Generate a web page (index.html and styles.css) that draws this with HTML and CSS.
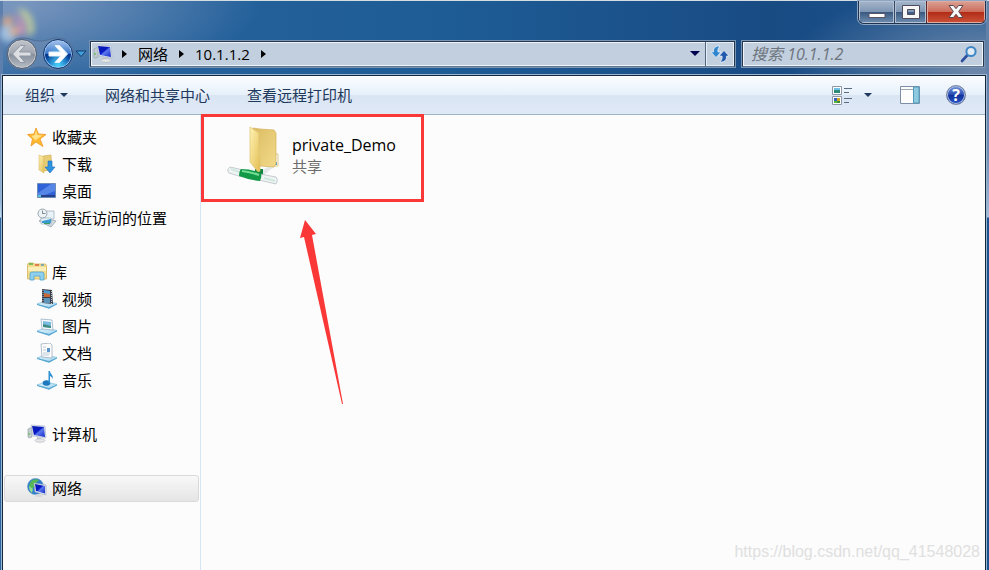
FILE: index.html
```html
<!DOCTYPE html>
<html lang="zh-CN">
<head>
  <meta charset="UTF-8">
  <title>10.1.1.2</title>
  <meta name="viewport" content="width=device-width, initial-scale=1.0">
  <link rel="stylesheet" href="styles.css">
</head>
<body>

  <!-- Shared icons -->
  <svg class="defs" width="0" height="0" aria-hidden="true">
    <defs>
      <linearGradient id="screen" x1="0" y1="0" x2="1" y2="1">
        <stop offset="0" stop-color="#0a1cae"/>
        <stop offset=".45" stop-color="#0717c4"/>
        <stop offset=".55" stop-color="#5b78ee"/>
        <stop offset="1" stop-color="#1226c8"/>
      </linearGradient>
      <linearGradient id="gold" x1="0" y1="0" x2="1" y2="1">
        <stop offset="0" stop-color="#fff3b4"/>
        <stop offset="1" stop-color="#e3bd52"/>
      </linearGradient>
      <linearGradient id="gold-back" x1="0" y1="0" x2="1" y2="1">
        <stop offset="0" stop-color="#dcbc62"/>
        <stop offset="1" stop-color="#f2da8a"/>
      </linearGradient>
      <linearGradient id="tray" x1="0" y1="0" x2="1" y2="1">
        <stop offset="0" stop-color="#e4f6fd"/>
        <stop offset="1" stop-color="#9fd2ec"/>
      </linearGradient>
      <symbol id="computer" viewBox="0 0 20 20">
        <path d="M1 5l4-2v10l-3 1-1-1z" fill="#c3cdd0" stroke="#8d999d" stroke-width=".6"/>
        <path d="M2 9v2" stroke="#45b72e" stroke-width="1"/>
        <path d="M4 1l14 1 1 12-13-2z" fill="#dfe6ef" stroke="#aab4c4" stroke-width=".6"/>
        <path d="M5 2l12 1 1 10-11-2z" fill="url(#screen)"/>
        <path d="M10 13l4 1v2h-4z" fill="#c0c5cb"/>
        <ellipse cx="13" cy="16.500" rx="5" ry="1.800" fill="#e5e7e9" stroke="#b0b4b8" stroke-width=".6"/>
      </symbol>
      <symbol id="tray-base" viewBox="0 0 20 20">
        <path d="M0 15l8-3 12 2.500-8 4.500z" fill="url(#tray)" stroke="#79bbdc" stroke-width=".7"/>
        <path d="M0 15l12 3 8-3.500v1l-8 4.200L0 16z" fill="#5aa8d2"/>
      </symbol>
    </defs>
  </svg>

  <div class="window">
    <header class="titlebar">
      <svg class="glow" viewBox="0 0 44 44" width="44" height="44" aria-hidden="true">
        <circle cx="8" cy="32" r="9" fill="#a7c6e4"/>
        <path d="M2 18l8-4 4 8-10 4z" fill="#e0a684"/>
        <path d="M17 8c10-2 19 8 17 24l-8 4c4-10 0-18-9-28z" fill="#c3cf9b"/>
        <path d="M14 12c10 4 14 12 10 24l-7-4c2-8 0-12-3-20z" fill="#c993b8"/>
        <path d="M12 24l8 4-4 8-7-3z" fill="#e6b090"/>
      </svg>

      <div class="caption">
        <button class="caption-btn minimize" aria-label="最小化">
          <svg viewBox="0 0 18 18" width="18" height="18"><rect x="1" y="10.500" width="16" height="4" fill="#fff" stroke="#58546a"/></svg>
        </button>
        <button class="caption-btn maximize" aria-label="最大化">
          <svg viewBox="0 0 18 18" width="18" height="18"><path d="M.5 2.500h17v13H.5zM5.500 6.500v5h7v-5z" fill="#f6f6f6" fill-rule="evenodd" stroke="#4f4b5f"/></svg>
        </button>
        <button class="caption-btn close" aria-label="关闭">
          <svg viewBox="0 0 18 18" width="18" height="18"><path d="M2 2.500h4.500L9 5.700l2.500-3.200H16L11.700 8.500l4.300 6h-4.500L9 11.300l-2.500 3.200H2l4.300-6z" fill="#f8f8f8" stroke="#5b4852"/></svg>
        </button>
      </div>

      <div class="navbar">
        <div class="history">
          <svg class="history-pill" viewBox="0 0 70 34" width="70" height="34" aria-hidden="true">
            <path d="M17 1c8 0 10 3 18 3s10-3 18-3a16 16 0 0 1 0 32c-8 0-10-3-18-3s-10 3-18 3a16 16 0 0 1 0-32z" fill="#6f8cb3" fill-opacity=".6" stroke="#4f6f97" stroke-width="1"/>
          </svg>
          <button class="round back" aria-label="后退">
            <svg viewBox="0 0 24 24" width="24" height="24"><path d="M2.500 12l8-8.500H15L9.500 10H21v4H9.500l5.500 6.500h-4.500z" fill="#dcdee1" stroke="#8e98a6"/></svg>
          </button>
          <button class="round forward" aria-label="前进">
            <svg viewBox="0 0 24 24" width="24" height="24"><path d="M21.500 12l-8-8.500H9l5.500 6.500H3v4h11.500L9 20.500h4.500z" fill="#fff" stroke="#e6f2fc"/></svg>
          </button>
        </div>
        <button class="recent" aria-label="最近浏览的位置">
          <svg viewBox="0 0 12 8" width="12" height="8"><path d="M1 1h10L6 6.500z" fill="#3fa0dc" stroke="#153e70"/></svg>
        </button>

        <nav class="address" aria-label="地址">
          <svg class="address-icon" width="20" height="20"><use href="#computer"/></svg>
          <span class="arrow-right"></span>
          <a href="#">网络</a>
          <span class="arrow-right"></span>
          <a href="#">10.1.1.2</a>
          <span class="arrow-right"></span>
          <button class="address-drop" aria-label="以前的位置"><span class="arrow-down"></span></button>
          <button class="refresh" aria-label="刷新">
            <svg viewBox="0 0 18 18" width="18" height="18">
              <path d="M7 1C3 2 2.500 4 2.500 7H0l5 5.500L10 7H7c-.5-2 0-4 2-6z" fill="#2f86cf" stroke="#e9f5fd" stroke-width=".7"/>
              <path d="M11 17c4-1 4.500-3 4.500-6H18l-5-5.500L8 11h3c.5 2 0 4-2 6z" fill="#2159ad" stroke="#e9f5fd" stroke-width=".7"/>
            </svg>
          </button>
        </nav>

        <label class="search">
          <input type="text" placeholder="搜索 10.1.1.2" aria-label="搜索 10.1.1.2">
          <svg viewBox="0 0 18 18" width="18" height="18">
            <path d="M2 16l5.500-6" stroke="#2c4f9e" stroke-width="2.600" stroke-linecap="round"/>
            <circle cx="11" cy="6.500" r="4.600" fill="#e0ebf5" stroke="#3e86c4" stroke-width="2"/>
          </svg>
        </label>
      </div>
    </header>

    <div class="client">
      <div class="toolbar">
        <button class="organize">组织 <span class="arrow-down"></span></button>
        <button>网络和共享中心</button>
        <button>查看远程打印机</button>
        <div class="tools">
          <button class="view" aria-label="更改您的视图">
            <svg viewBox="0 0 20 19" width="20" height="19">
              <path d="M.5.500h9v8h-9zM.5 10.500h9v8h-9z" fill="#fff" stroke="#8c98a8"/>
              <path d="M2 2h6v2H2z" fill="#6fc0e4"/><path d="M2 4h6v3H2z" fill="#2d8c78"/>
              <path d="M2 12h3v3H2z" fill="#2e63bf"/><path d="M5 12h3v3H5z" fill="#d8a51f"/>
              <path d="M2 15h3v2H2z" fill="#5db53c"/><path d="M5 15h3v2H5z" fill="#388e3e"/>
              <path d="M12 2.500h8M12 6.500h5M12 12.500h8M12 16.500h5" stroke="#5a6b82"/>
            </svg>
          </button>
          <button class="view-drop" aria-label="更多选项"><span class="arrow-down"></span></button>
          <button class="preview" aria-label="显示预览窗格">
            <svg viewBox="0 0 20 18" width="20" height="18">
              <path d="M.5.500h19v17H.5z" fill="#fdfdfd" stroke="#7c8fa6"/>
              <path d="M1 3.500h12" stroke="#9aa8b8"/>
              <path d="M13.500 1h5.500v16h-5.500z" fill="#8dc9df" stroke="#559bbd"/>
            </svg>
          </button>
          <button class="help" aria-label="获取帮助">?</button>
        </div>
      </div>

      <div class="content">
        <aside class="sidebar">
          <ul class="group">
            <li><a href="#">
              <svg viewBox="0 0 20 20" width="20" height="20"><path d="M9 1l2.500 6 7.500.500-6 4.500 3 7.500-7-4.500-5 4 1.500-7-5-4.500L7 7z" fill="#ffb92e" stroke="#ef9d2c" stroke-width=".9"/><path d="M9 3l1.500 5 5 .500-5 3-2 2-4-4.500L8 8z" fill="#ffe28a"/></svg>
              收藏夹</a></li>
            <li class="child"><a href="#">
              <svg viewBox="0 0 20 20" width="20" height="20"><path d="M6 2l8-1 1 15-9 1z" fill="#e8cd75" stroke="#c9a84e" stroke-width=".6"/><path d="M2 1l5 2v16l-5-3z" fill="url(#gold)" stroke="#d9bd66" stroke-width=".6"/><path d="M11 7h4v6h3l-5 6-5-6h3z" fill="#2f93e0" stroke="#1c6fbd" stroke-width=".6"/></svg>
              下载</a></li>
            <li class="child"><a href="#">
              <svg viewBox="0 0 20 20" width="20" height="20"><path d="M.5 2.500h18v14H.5z" fill="#2f62d8" stroke="#6f8bb8"/><path d="M1 12L14 3h4v7L8 14H1z" fill="#6f9cf0" opacity=".6"/><path d="M1 14h17v2H1z" fill="#26408a"/><path d="M1 14h3v2H1z" fill="#55c4d0"/></svg>
              桌面</a></li>
            <li class="child"><a href="#">
              <svg viewBox="0 0 20 20" width="20" height="20"><path d="M8 3h9v8H8z" fill="#e8f2f8" stroke="#98a9b8" stroke-width=".7"/><path d="M2 13l4-3 13 3-5 6z" fill="#d3dbe1" stroke="#8e9ba6" stroke-width=".7"/><path d="M4 10h10v6H4z" fill="#e8f4fa" stroke="#97a8b5" stroke-width=".6"/><path d="M5 13l9-2v4H5z" fill="#3b9bd0"/><path d="M7 15h6v1H7z" fill="#3d9b64"/><circle cx="5.500" cy="5.500" r="4.500" fill="#edf2f5" stroke="#98a6b0"/><path d="M5.500 2.500v3h3" fill="none" stroke="#60717e" stroke-width=".8"/></svg>
              最近访问的位置</a></li>
          </ul>

          <ul class="group">
            <li><a href="#">
              <svg viewBox="0 0 20 20" width="20" height="20"><path d="M.5 3l1-2h5l1 1h11l1 2v13H.5z" fill="#f3dc8b" stroke="#d5b458" stroke-width=".8"/><path d="M2 2h4" stroke="#3fae49" stroke-width="1.300"/><path d="M8 3h4" stroke="#d64536" stroke-width="1.200"/><path d="M14 3h3" stroke="#3b8fd3" stroke-width="1.200"/><path d="M1 5h18v4H1z" fill="#fbeeb9"/><path d="M3 18v-6q0-2 2-2h10q2 0 2 2v6h-4v-4H7v4z" fill="#8fd0ee" stroke="#4ea3cf" stroke-width=".8"/></svg>
              库</a></li>
            <li class="child"><a href="#">
              <svg viewBox="0 0 20 20" width="20" height="20"><use href="#tray-base"/><path d="M5 0l10 1 1 14-11-1z" fill="#3a3f4a"/><path d="M7 1l6 1v5H7z" fill="#4a9bd0"/><path d="M7 4l6 1v3H7z" fill="#c8693a"/><path d="M7 9h6v5H7z" fill="#5b94b8"/><path d="M6 1v13M14.500 2v13" stroke="#b9c1cb" stroke-dasharray="1 1"/></svg>
              视频</a></li>
            <li class="child"><a href="#">
              <svg viewBox="0 0 20 20" width="20" height="20"><use href="#tray-base"/><path d="M4 3l11 1 1 10-11-1z" fill="#f8fbfd" stroke="#98b1c5" stroke-width=".8"/><path d="M6 5l8 1v6l-8-1z" fill="#7abbe4"/><path d="M6 8l8 2v2l-8-1z" fill="#3f8c7e"/></svg>
              图片</a></li>
            <li class="child"><a href="#">
              <svg viewBox="0 0 20 20" width="20" height="20"><use href="#tray-base"/><path d="M4 1l9-1 2 2v13l-10-1z" fill="#fdfdfe" stroke="#9daebe" stroke-width=".8"/><path d="M6 4h3M6 7h3M6 10h7M6 12h6" stroke="#a9bccd" stroke-width=".8"/><path d="M10 5h3v4h-3z" fill="#5b97cd"/></svg>
              文档</a></li>
            <li class="child"><a href="#">
              <svg viewBox="0 0 20 20" width="20" height="20"><use href="#tray-base"/><ellipse cx="9.500" cy="13" rx="3.800" ry="2.800" fill="#1e78bd"/><path d="M11.500 13V1h1.500c0 3 4 4 2.500 8-.5-2-1.500-2.500-2.500-3v7z" fill="#2f91d2"/></svg>
              音乐</a></li>
          </ul>

          <ul class="group">
            <li><a href="#"><svg width="20" height="20"><use href="#computer"/></svg> 计算机</a></li>
          </ul>

          <ul class="group">
            <li class="selected"><a href="#">
              <svg viewBox="0 0 20 20" width="20" height="20"><circle cx="8.500" cy="8.500" r="8" fill="#2f7fcb" stroke="#5795c6" stroke-width=".6"/><path d="M4 3q4-3 8-1l-3 3-2 4-3 3-2-4z" fill="#56b956"/><path d="M2 8l4 3-1 4q-3-2-3-7z" fill="#8edb90"/><path d="M7 5l12 2v10L8 14z" fill="#e7ecf4" stroke="#98a5b8" stroke-width=".6"/><path d="M8 6l10 2v7.500L9 13z" fill="url(#screen)"/><ellipse cx="12" cy="17.500" rx="4" ry="1.500" fill="#d6dade"/></svg>
              网络</a></li>
          </ul>
        </aside>

        <main class="files">
          <a class="share" href="#">
            <svg viewBox="0 0 54 60" width="54" height="60" aria-hidden="true">
              <path d="M33 46l9-6 5 1-10 8z" fill="#e4e8ea"/>
              <path d="M47 28h4v12h-4z" fill="#fafafa" stroke="#d8bf74" stroke-width=".8"/>
              <path d="M48 36h2v3h-2z" fill="#4a9be0"/>
              <path d="M26 2l7 1 14 1 2 3v31l-2 3-14-1z" fill="url(#gold-back)" stroke="#d3b25a" stroke-width=".7"/>
              <path d="M28 43h8v6h-8z" fill="#12843e"/>
              <path d="M23 1l9 6v21l1 2v15l-2 1-8-10z" fill="url(#gold)" stroke="#dec273" stroke-width=".7"/>
              <path d="M3 41l13 3-1 7-13-4q-3-3 1-6z" fill="#eef3f4" stroke="#b7c0c4" stroke-width=".8"/>
              <path d="M33 48l16 3q3 3 0 7l-17-4z" fill="#eef3f4" stroke="#b7c0c4" stroke-width=".8"/>
              <path d="M14 43q10 0 20 4 1 4-1 8-11-1-21-5 0-5 2-7z" fill="#139a48"/>
              <path d="M15 45q9 1 17 4" fill="none" stroke="#75dc96" stroke-width="2"/>
              <path d="M4 43l8 3M37 52l11 3" stroke="#c9e6d8" stroke-width="1.500"/>
            </svg>
            <span class="share-text">
              <span class="share-name">private_Demo</span>
              <span class="share-type">共享</span>
            </span>
          </a>
          <svg class="pointer" viewBox="0 0 46 186" width="46" height="186" aria-hidden="true">
            <path d="M5 1l11 14-4 1 31 169h-1L4 18l-4 1z" fill="#fb3838"/>
          </svg>
          <p class="watermark">https://blog.csdn.net/qq_41548028</p>
        </main>
      </div>
    </div>
  </div>

</body>
</html>
```
FILE: styles.css
```css
* {
  box-sizing: border-box;
  margin: 0;
  padding: 0;
}

body {
  font-family: 'Open Sans', 'Noto Sans CJK SC', sans-serif;
  font-size: 15px;
  line-height: 20px;
  color: #000;
}

button,
input {
  font: inherit;
  color: inherit;
  border: none;
  background: none;
}

a {
  color: inherit;
  text-decoration: none;
}

ul {
  list-style: none;
}

svg {
  display: block;
  flex: none;
}

.defs {
  position: absolute;
}

.window {
  position: relative;
  display: flex;
  flex-direction: column;
  min-height: 100vh;
  padding: 0 3px 0 2px;
  border-top: 1px solid #d3dde2;
  background:
    linear-gradient(#6281a8 75px, #6d8db4 150px, #a3bddb 216px, transparent 217px) right top / 3px 217px no-repeat,
    linear-gradient(#5c7fae 75px, #8fb4d8 200px, #c6e0f2 216px, transparent 217px) left top / 3px 217px no-repeat,
    radial-gradient(ellipse 260px 90px at 0 0, #7895bd 10%, transparent),
    radial-gradient(ellipse 200px 90px at 100% 70px, #6b86a8 10%, transparent),
    linear-gradient(90deg, #2a659f, #1e5c96 45%, #194b83 78%, #1a5490);
}

/* Title bar */
.titlebar {
  display: flex;
  flex-direction: column;
}

.glow {
  position: absolute;
  top: 0;
  left: 0;
  filter: blur(3px);
  opacity: 0.9;
}

.caption {
  display: flex;
  align-self: flex-end;
  height: 23px;
  border: 1px solid #1f3350;
  border-top: none;
  border-radius: 0 0 6px 6px;
  box-shadow: 0 0 0 1px #8fa6c2;
  overflow: hidden;
}

.caption-btn {
  display: flex;
  align-items: center;
  justify-content: center;
  width: 35px;
  background: linear-gradient(#a5b6cb, #7f97b4 48%, #38587f 50%, #6f8eb1);
  box-shadow: inset 0 0 0 1px #b3c1d2;
}

.maximize {
  width: 32px;
  border-left: 1px solid #304765;
}

.close {
  width: 59px;
  border-left: 1px solid #5c2a2a;
  background: linear-gradient(#dca295, #cc6d5c 48%, #b02b16 50%, #cc5338);
  box-shadow: inset 0 0 0 1px #dfaaa0;
}

.navbar {
  display: flex;
  align-items: center;
  height: 51px;
  padding: 8px 2px 0 3px;
}

.history {
  position: relative;
  display: flex;
  gap: 6px;
  padding: 0 2px;
}

.history-pill {
  position: absolute;
  top: -2px;
  left: 0;
}

.round {
  position: relative;
  display: flex;
  align-items: center;
  justify-content: center;
  width: 30px;
  height: 30px;
  border: 1px solid #555f70;
  border-radius: 50%;
  background: linear-gradient(#c1c5cb, #a0a6b0 48%, #858e9b 50%, #b8bdc4);
  box-shadow: inset 0 0 0 1px #c9cdd3;
}

.forward {
  border-color: #15386f;
  background: radial-gradient(ellipse at 50% 100%, #4fd9ff, transparent 60%), linear-gradient(#a9c5ed, #3c79cb 48%, #053088 50%, #1680d2);
  box-shadow: inset 0 0 0 1px #9cc3ec;
}

.recent {
  margin: 0 3px 0 0;
}

.address,
.search {
  display: flex;
  align-items: center;
  height: 26px;
  border: 1px solid #26384f;
  border-bottom-color: #62788f;
  background: #c1cfdf;
  box-shadow: inset 0 0 0 1px #eef4f9, 0 0 0 1px #7895b6;
}

.address {
  flex: 1;
  padding-left: 2px;
  margin-right: 7px;
}

.address-icon {
  margin-right: 9px;
}

.address a {
  margin: 0 11px;
}

.arrow-right {
  border: 4px solid transparent;
  border-left: 5px solid #000;
  border-right: none;
}

.arrow-down {
  display: inline-block;
  border: 4px solid transparent;
  border-top: 4px solid #1e395b;
  border-bottom: none;
}

.address-drop {
  display: flex;
  align-items: center;
  justify-content: center;
  width: 20px;
  height: 24px;
  margin-left: auto;
}

.address-drop .arrow-down {
  border-width: 5px;
  border-top-color: #000050;
  border-bottom: none;
}

.refresh {
  display: flex;
  align-items: center;
  justify-content: center;
  width: 29px;
  height: 24px;
  border-left: 1px solid #52677f;
  box-shadow: inset 0 0 0 1px #e6eef5;
}

.search {
  flex: 0 1 242px;
  padding: 0 5px 0 8px;
}

.search input {
  flex: 1;
  min-width: 0;
  font-size: 16px;
  font-style: italic;
  outline: none;
}

.search input::placeholder {
  color: #6d747c;
}

/* Client area */
.client {
  display: flex;
  flex-direction: column;
  flex: 1;
  border: 1px solid #14263c;
  border-bottom: none;
  box-shadow: 0 0 0 1px #9db7d3;
  background: #fcfcfc;
}

.toolbar {
  display: flex;
  align-items: center;
  height: 39px;
  padding: 0 19px 0 22px;
  gap: 37px;
  color: #1e395b;
  background: linear-gradient(#fbfdff, #e6f0fa 50%, #dae5f4 51%, #dfe9f6);
  border-bottom: 1px solid #a0b2c8;
}

.organize {
  display: flex;
  align-items: center;
  gap: 5px;
}

.tools {
  display: flex;
  align-items: center;
  margin-left: auto;
}

.view-drop {
  display: flex;
  padding: 6px;
  margin: 0 22px 0 6px;
}

.help {
  width: 20px;
  height: 20px;
  margin-left: 26px;
  border: 1px solid #76849d;
  border-radius: 50%;
  background: linear-gradient(#7797dc, #2447b0 50%, #10309a 52%, #2858c8);
  box-shadow: inset 0 0 0 1px #b2c3e5;
  color: #fff;
  font-size: 16px;
  font-weight: 700;
  line-height: 18px;
}

.content {
  display: flex;
  flex: 1;
}

.sidebar {
  width: 198px;
  padding: 9px 1px 0;
  border-right: 1px solid #d6e5f5;
}

.group {
  margin-bottom: 27px;
}

.sidebar a {
  display: flex;
  align-items: center;
  gap: 5px;
  height: 27px;
  padding: 0 0 2px 23px;
}

.sidebar .child a {
  padding-left: 33px;
}

.sidebar .selected a {
  padding-left: 22px;
  border: 1px solid #d9d9d9;
  border-radius: 3px;
  background: linear-gradient(#f8f8f8, #e5e5e5);
}

.files {
  position: relative;
  flex: 1;
}

.share {
  display: flex;
  width: 223px;
  height: 88px;
  margin-top: -1px;
  padding: 9px 0 0 23px;
  gap: 11px;
  border: 3px solid #fb3838;
}

.share-text {
  display: flex;
  flex-direction: column;
  padding-top: 8px;
}

.share-name {
  font-size: 16px;
  line-height: 22px;
}

.share-type {
  color: #6d6d6d;
}

/* Red arrow lying over the file list */
.pointer {
  position: absolute;
  top: 104px;
  left: 99px;
}

.watermark {
  position: absolute;
  right: 5px;
  bottom: 8px;
  font-family: 'Liberation Sans', sans-serif;
  font-size: 16px;
  color: #e0e0e0;
}
```
